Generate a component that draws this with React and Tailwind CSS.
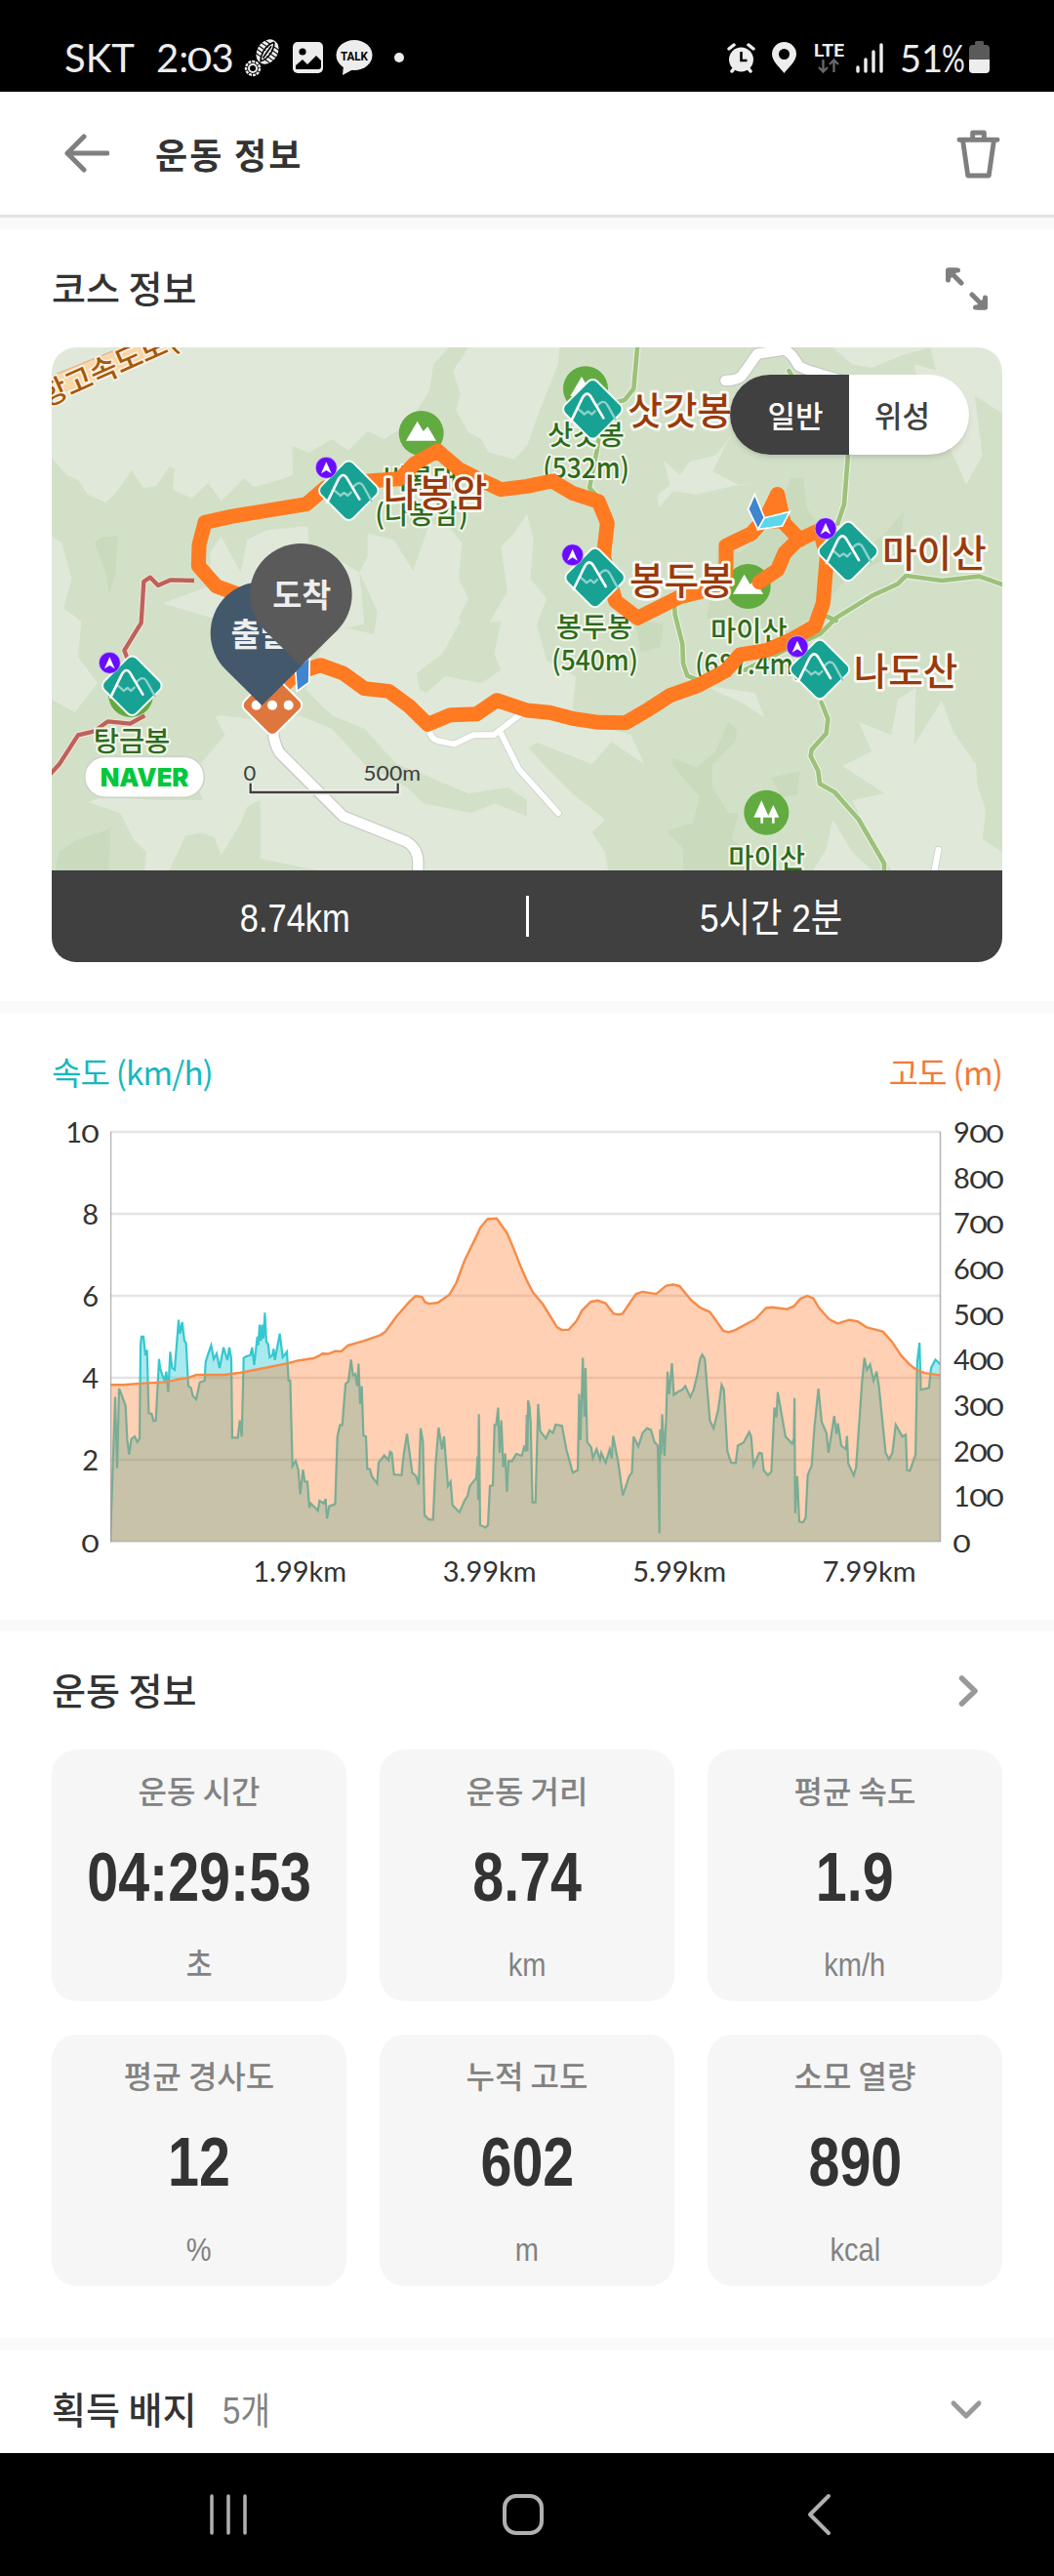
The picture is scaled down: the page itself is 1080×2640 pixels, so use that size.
import React from 'react';

const KR = "font-['Noto_Sans_CJK_KR',sans-serif]";
const NARROW = "font-['Liberation_Sans','Noto_Sans_CJK_KR',sans-serif]";
const ROUND = "font-['Lato','Noto_Sans_CJK_KR',sans-serif]";

const stats = [
  { label: '운동 시간', value: '04:29:53', unit: '초' },
  { label: '운동 거리', value: '8.74', unit: 'km' },
  { label: '평균 속도', value: '1.9', unit: 'km/h' },
  { label: '평균 경사도', value: '12', unit: '%' },
  { label: '누적 고도', value: '602', unit: 'm' },
  { label: '소모 열량', value: '890', unit: 'kcal' },
];

const elevationA =
  '220,972 260,972 310,968 390,964 425,957 460,952 485,944 570,944 620,938 690,926 765,912 800,904 845,898 860,892 872,885 890,886 912,878 930,879 950,863 1000,850 1050,834 1065,825 1100,782 1140,741 1158,726 1178,728 1187,742 1200,747 1227,744 1262,722 1283,690 1310,625 1340,570 1358,535 1380,512 1408,511 1440,552 1460,595 1482,645 1500,682';
const elevationB =
  '18,715 48,748 90,812 105,820 125,819 148,795 165,765 190,742 212,738 235,746 258,774 270,777 285,775 325,720 345,714 385,720 415,697 435,694 455,698 490,738 515,757 545,770 585,822 600,826 620,820 680,790 712,759 730,757 775,762 795,754 815,733 835,725 853,732 870,759 900,790 925,802 960,792 985,796 1010,812 1060,824 1085,850 1115,892 1140,916 1160,930 1185,939 1230,945';
const speedA =
  '220,1407 235,1005 241,1203 247,982 253,995 267,1030 272,1125 278,1165 284,1122 295,1115 303,1130 310,1120 313,860 316,838 322,838 328,890 333,875 338,1050 347,1052 353,1072 360,1070 370,900 373,925 380,945 387,960 392,935 398,992 404,880 410,925 418,930 430,792 434,830 441,798 448,850 453,856 460,975 468,980 474,1003 484,1012 495,965 510,960 513,908 523,880 530,862 538,900 547,885 556,925 568,868 580,903 586,868 592,900 595,1118 612,1118 618,1070 624,1115 630,897 640,892 650,890 656,868 662,917 672,838 675,862 679,805 683,850 687,805 691,843 695,772 700,853 705,858 710,895 718,890 722,872 726,903 741,830 750,895 763,880 768,960 773,960 780,1197 790,1182 798,1208 804,1275 812,1207 818,1240 826,1240 832,1312 836,1300 858,1320 863,1293 876,1300 882,1288 886,1342 893,1308 911,1302 918,1115 926,1083 933,1083 943,970 952,962 960,902 966,945 973,942 979,975 983,913 988,1025 993,975 998,1112 1006,1115 1010,1205 1018,1205 1024,1225 1040,1245 1045,1187 1062,1167 1075,1180 1080,1157 1085,1160 1092,1220 1115,1222 1122,1165 1132,1107 1148,1215 1160,1225 1168,1248 1174,1092 1181,1130 1186,1333 1200,1345 1212,1345 1220,1190 1229,1090 1240,1150 1246,1115 1258,1252 1266,1240 1272,1305 1293,1325 1310,1290 1318,1280 1325,1252 1345,1230 1349,1170 1351,1290 1353,1053 1357,1360 1373,1367 1381,1360 1387,1252 1396,1250 1401,1083 1406,1083 1412,1035 1417,1160 1422,1070 1428,1200 1434,1162 1439,1268 1444,1183 1455,1183 1468,1163 1485,1168 1493,1140 1498,1157';
const speedB =
  '0,1055 2,1155 4,1015 8,1030 12,1080 17,1297 26,1297 34,1025 40,1100 57,1120 68,1098 78,1105 86,1082 105,1085 118,1150 137,1215 152,1208 156,997 160,1125 167,897 172,1060 175,925 180,1130 192,1145 197,1175 208,1150 218,1178 222,1160 235,1187 247,1150 253,1175 257,1113 272,1185 286,1278 305,1225 313,1215 318,1115 332,1142 345,1105 358,1092 370,1097 380,1130 390,1140 395,1383 397,1095 400,1165 403,1053 410,1168 415,1060 419,935 424,997 432,912 438,1000 452,990 463,985 472,975 487,1005 497,985 508,942 516,900 522,888 530,900 545,1070 556,1092 570,1040 580,972 587,985 597,1155 608,1187 622,1188 628,1140 645,1132 662,1103 668,1115 675,1195 692,1160 700,1162 705,1208 718,1222 728,1212 737,1035 743,1062 747,992 755,1035 770,1115 790,1135 795,1120 797,1008 799,1327 805,1225 811,1350 822,1353 830,1340 836,1222 848,1195 856,1090 868,982 878,1075 892,1105 898,1160 915,1058 922,1108 926,1078 936,1140 950,1150 953,1113 957,1190 973,1223 980,1200 998,960 1005,897 1012,930 1022,915 1032,960 1041,935 1048,975 1068,1160 1078,1178 1088,1160 1098,1082 1118,1115 1128,1110 1132,1208 1140,1210 1157,1165 1162,910 1169,855 1173,985 1197,980 1203,925 1216,902 1226,910 1230,915';

const project = (run, originX, stepX) =>
  run.split(' ').map((pair) => {
    const [x, y] = pair.split(',').map(Number);
    return `${(originX + x / stepX).toFixed(1)},${((y - 271) / 2.703 + 2).toFixed(1)}`;
  });

const joinRuns = (a, b) => [...project(a, -73.3, 3), ...project(b, 426.7, 2.904)].join(' L');

const speedLine = joinRuns(speedA, speedB);
const elevationLine = joinRuns(elevationA, elevationB);

// Zeros are drawn as low round circles
const Digits = ({ children }) =>
  children.split('').map((ch, i) =>
    ch === '0' ? (
      <span key={i} className="inline-block origin-[50%_78%] scale-x-[1.1] scale-y-[0.84]">
        0
      </span>
    ) : (
      <span key={i}>{ch}</span>
    )
  );

const StatusBar = () => (
  <div className={`flex h-[94px] items-center bg-black pt-6 pl-[66px] pr-[66px] text-[40px] leading-none text-[#ededed] ${ROUND}`}>
    <span className="w-[94px]">SKT</span>
    <span className="w-[90px] whitespace-nowrap">
      <Digits>2:03</Digits>
    </span>
    <svg width="38" height="39" viewBox="0 0 38 39" fill="none" stroke="#ededed">
      <g transform="rotate(35 24 13)">
        <ellipse cx="24" cy="13" rx="10.5" ry="13.5" fill="#ededed" stroke="none" />
        <path d="M13 5h9M13 9h9M13 13h9M13 17h9M13 21h9M26 5h9M26 9h9M26 13h9M26 17h9M26 21h9" stroke="#000" strokeWidth="1.1" />
        <path d="M24 1c-5 7-5 17 0 24c5-7 5-17 0-24M24 6v15" stroke="#000" strokeWidth="1.6" />
      </g>
      <circle cx="9" cy="30" r="7" strokeWidth="2.4" strokeDasharray="3 1" />
      <circle cx="9" cy="30" r="4" strokeWidth="2" />
    </svg>
    <svg className="ml-3" width="31" height="32" viewBox="0 0 31 32">
      <rect width="31" height="32" rx="5" fill="#ededed" />
      <circle cx="10" cy="10" r="3.6" fill="#000" />
      <path d="M3 28v-4l7-6l5 5l9-9l5 5v6q0 3-3 3z" fill="#000" />
    </svg>
    <svg className="ml-[13px]" width="38" height="37" viewBox="0 0 38 37">
      <ellipse cx="19" cy="15.5" rx="18.5" ry="15.5" fill="#ededed" />
      <path d="M8 26l-1 10l11-6z" fill="#ededed" />
      <text x="5" y="20.5" fontSize="13" fontWeight="700" fontFamily="Roboto" textLength="28" lengthAdjust="spacingAndGlyphs" fill="#000">
        TALK
      </text>
    </svg>
    <span className="ml-[22px] size-2.5 rounded-full bg-[#ededed]" />

    <svg className="ml-auto" width="29" height="31" viewBox="0 0 29 31">
      <circle cx="14.5" cy="17" r="12.5" fill="#ededed" />
      <path d="M2 6l5-4M27 6l-5-4M5 29l3-4M24 29l-3-4" stroke="#ededed" strokeWidth="3.5" strokeLinecap="round" />
      <path d="M14.5 9v9h6" fill="none" stroke="#000" strokeWidth="2.6" />
    </svg>
    <svg className="ml-[17px]" width="25" height="32" viewBox="0 0 25 32">
      <path d="M12.500 32C9 27 0 20 0 12.500a12.500 12.500 0 0 1 25 0C25 20 16 27 12.500 32z" fill="#ededed" />
      <circle cx="12.500" cy="12.500" r="5.500" fill="#000" />
    </svg>
    <svg className="ml-[18px]" width="31" height="32" viewBox="0 0 31 32">
      <text x="0" y="14.500" fontSize="19" fontWeight="700" fontFamily="Roboto" textLength="31" lengthAdjust="spacingAndGlyphs" fill="#ededed">
        LTE
      </text>
      <path d="M9.500 18v12M5 26l4.500 4.500l4.500-4.500M20.500 31V19M16 23l4.500-4.500L25 23" fill="none" stroke="#666" strokeWidth="2.400" />
    </svg>
    <svg className="ml-3" width="28" height="32" viewBox="0 0 28 32">
      <path d="M2 26v4M10 18v12M18 10v20M26 3v27" stroke="#ededed" strokeWidth="3.400" strokeLinecap="round" />
    </svg>
    <span className="ml-[17px] flex w-[71px] text-[38px] whitespace-nowrap">
      <span className="w-[22px]">5</span>
      <span className="w-[21px]">1</span>
      <span className="origin-left scale-x-[0.78]">%</span>
    </span>
    <svg width="21" height="34" viewBox="0 0 21 34">
      <path d="M6 4V1.500Q6 0 7.500 0h6Q15 0 15 1.500V4h2q4 0 4 4v11H0V8q0-4 4-4z" fill="#5a5a5a" />
      <path d="M0 19h21v10q0 4-4 4H4q-4 0-4-4z" fill="#ededed" />
    </svg>
  </div>
);

const Header = () => (
  <div className="flex h-[129px] items-center border-b-[3px] border-[#e2e2e2] pl-[66px] pr-[55px]">
    <svg width="46" height="40" viewBox="0 0 46 40" fill="none" stroke="#7f7f7f" strokeWidth="5" strokeLinecap="round" strokeLinejoin="round">
      <path d="M20 3L3 20l17 17M3 20h41" />
    </svg>
    <h1 className={`ml-[47px] text-[36px] leading-none font-bold tracking-[2.200px] text-[#333] ${KR}`}>운동 정보</h1>
    <svg className="ml-auto" width="45" height="51" viewBox="0 0 46 52" fill="none" stroke="#7f7f7f" strokeWidth="5" strokeLinecap="round" strokeLinejoin="round">
      <path d="M3 11.500h40M7 14l5 35h22l5-35M17 10V4h12v6" />
    </svg>
  </div>
);

const SectionTitle = ({ children }) => (
  <h2 className={`-mt-[3px] text-[38px] leading-none font-medium text-[#333] ${KR}`}>{children}</h2>
);

const Peak = ({ x, y, badge = true }) => (
  <g transform={`translate(${x} ${y})`}>
    <rect x="-70" y="-70" width="140" height="140" rx="20" transform="rotate(45)" fill="#17a294" stroke="#f3faf4" strokeWidth="6" />
    <g fill="none" stroke="#8fd2ca" strokeWidth="7" strokeLinecap="round" strokeLinejoin="round">
      <path d="M14 -10Q34 -36 48 -8L70 32" />
      <path d="M-44 0l10 8l8 8l12-9l11 9l10-10" />
    </g>
    <path d="M-66 36L-32 -34Q-17 -60 -3 -34L33 27" fill="none" stroke="#fff" strokeWidth="8" strokeLinecap="round" />
    {badge && (
      <g transform="translate(-69 -70)">
        <circle r="33" fill="#6a0cff" stroke="#d9d3f3" strokeWidth="2" />
        <path d="M0 -18L16 18L0 8L-16 18z" fill="#fff" />
      </g>
    )}
  </g>
);

const Poi = ({ x, y, tree }) => (
  <g transform={`translate(${x} ${y})`}>
    <circle r="69" fill="#62ab41" />
    {tree ? (
      <path d="M-15 -37L8 15h-18v18h-8v-18h-21zM21 -23L39 15h-14v18h-8v-18h-14z" fill="#fff" />
    ) : (
      <path d="M-47 23L-12 -37L6 -6L20 -20L46 23z" fill="#fff" />
    )}
  </g>
);

const greenLabels = [
  ['비룡대', 1172, 482, 230],
  ['(나봉암)', 1176, 590, 286],
  ['삿갓봉', 1681, 348, 236],
  ['(532m)', 1682, 450, 266],
  ['봉두봉', 1707, 940, 236],
  ['(540m)', 1709, 1042, 266],
  ['마이산', 2182, 952, 236],
  ['(687.4m)', 2182, 1054, 330],
  ['마이산', 2237, 1650, 236],
  ['탕금봉', 285, 1290, 236],
];

const peaks = [
  { x: 1702, y: 238, badge: false, name: '삿갓봉', lx: 1810, ly: 286 },
  { x: 952, y: 488, name: '나봉암', lx: 1058, ly: 536 },
  { x: 1709, y: 756, name: '봉두봉', lx: 1815, ly: 806 },
  { x: 2487, y: 675, name: '마이산', lx: 2592, ly: 722 },
  { x: 2400, y: 1038, name: '나도산', lx: 2504, ly: 1086 },
  { x: 286, y: 1088 },
];

const trails = [
  'M1840 40L1828 175L1800 210L1760 220',
  'M1720 330L1715 365L1692 480L1730 520',
  'M2305 120L2330 160M2487 375L2475 530L2455 590',
  'M1953 830L1955 870L1978 960L1980 1020L1993 1058L2030 1072',
  'M2170 1040L2290 980L2400 930L2450 880L2560 812L2640 775L2665 750L2775 765L2890 752L2970 780M2410 870L2450 888',
  'M2405 1140L2425 1190L2420 1235L2375 1285L2372 1305L2395 1350L2400 1390L2445 1415L2520 1500L2598 1635V1670',
];

const redTrails = [
  'M477 765L405 763L366 780L342 755L322 768L314 895L262 980L272 1005',
  'M30 1365L62 1330L120 1240L170 1228L212 1198L280 1205L325 1180',
];

const CourseMap = () => (
  <svg className="block" width="974" height="536" viewBox="39 48 2922 1608" fontFamily="'Noto Sans CJK KR', sans-serif">
    <rect x="39" y="48" width="2922" height="1608" fill="#e0e9d9" />

    {/* Terrain */}
    <g fill="#d3e0c8">
      <path d="M39 388L85 440L120 455L150 500L205 525L240 490L285 425L320 480L360 475L400 415L418 420L410 485L470 512L520 465L560 520L630 450L660 478L740 455L780 440L778 350L830 372L900 330L950 365L1010 305L1060 330L1110 300L1160 245L1200 180L1212 100L1260 48L1320 48L1300 80L1272 120L1295 190L1282 240L1320 310L1360 330L1380 370L1460 392L1500 350L1540 240L1595 100L1600 48H2740L2760 130L2850 180L2961 250V1656H2560L2500 1600L2440 1500L2420 1590L2380 1656H1750L1740 1600L1700 1540L1740 1500L1640 1420L1560 1340L1505 1280L1530 1262L1700 1330L1760 1260L1860 1330L1820 1240L1720 1210L1640 1160L1650 1060L1560 1010L1530 900L1560 820L1510 760L1520 640L1500 560L1460 620L1420 660L1440 800L1380 900L1310 950L1290 880L1320 820L1290 760L1300 650L1260 600L1200 590L1150 735L1090 640L1010 620L1010 690L985 740L1040 860L1030 930L940 910L880 940L820 1100L900 1180L1000 1220L1100 1330L1180 1360L1320 1420L1440 1400L1500 1440V1490L1400 1450L1330 1480L1180 1450L1130 1400L1000 1330L900 1220L800 1180L720 1200L560 1180L500 1190L540 1180L572 1240L470 1360L505 1440L360 1440L200 1430L150 1446L250 1480L290 1560L330 1600L325 1656H39V1130L110 1170L180 1080L120 1000L130 890L75 850L100 760L70 650L39 628z" />
      <path d="M400 1656L450 1550L500 1540L540 1555L560 1610L620 1510L640 1460L680 1440V1620L780 1640L860 1656z" />
      <path d="M1170 1100L1160 1050L1240 990L1290 900L1420 890L1400 990L1420 1040L1360 1080L1250 1060L1190 1110z" />
    </g>
    <g fill="#e0e9d9">
      <path d="M530 780L525 680L560 630L620 740L640 640L700 610L825 598L830 650L900 690L985 740L1000 900L940 910L860 930L760 900L640 860L530 880L380 835z" />
      <path d="M1920 395L1970 440L2000 400L2080 380L2120 330L2070 430L2150 470L2210 465L2130 475L2020 500L1950 490L1905 540L1900 505L1940 470z" />
      <path d="M2440 48L2500 100L2560 110L2660 70L2740 48zM2690 100L2870 150L2900 380L2850 470L2820 400L2780 320L2720 260z" />
      <path d="M2470 1335L2560 1290L2520 1200L2620 1240L2640 1130L2695 1095L2690 1270L2775 1135L2810 1230L2880 1330L2885 1400L2910 1470L2900 1560L2961 1600V1656H2620L2560 1560L2500 1440L2600 1420z" />
      <path d="M2060 1090L2200 1110L2230 1185L2160 1140L2080 1105z" />
    </g>
    <g fill="#cadbbd">
      <path d="M170 650L190 632L243 628L235 740L215 810L205 740z" />
      <path d="M60 1600L120 1560L220 1528L215 1656H50z" />
      <path d="M2280 540L2310 450L2350 450L2360 540L2400 600L2380 640L2460 720L2520 680L2600 620L2660 550L2650 630L2600 700L2480 760L2400 860L2300 930L2180 900L2050 880L2070 800L2090 640L2150 680L2250 600z" />
      <path d="M2100 1240L2120 1200L2145 1220L2140 1260L2070 1330L2070 1400L2120 1480L2150 1480L2130 1560L2180 1600V1656H1980V1590L1930 1535L2010 1510L2030 1430L1945 1330L1950 1310L2020 1340L2080 1290z" />
      <path d="M2250 1370L2340 1350L2330 1425L2280 1430zM1830 880L1920 900L1910 970L1850 985z" />
    </g>

    {/* Highway */}
    <path d="M20 175L440 10" stroke="#f8d7a8" strokeWidth="62" />
    <path d="M20 143L300 30" stroke="#dfb49a" strokeWidth="4" />
    <text transform="translate(20 232) rotate(-24)" fontSize="91" fontWeight="500" fill="#a5580c" stroke="#fdf3e2" strokeWidth="10" paintOrder="stroke">
      항고속도로(
    </text>

    {/* Roads and trails */}
    <g fill="none" strokeLinejoin="round" strokeLinecap="round">
      {[['#c4c8c0', 38], ['#ffffff', 31]].map(([color, width]) => (
        <g key={color} stroke={color} strokeWidth={width}>
          <path d="M2110 150Q2145 150 2160 136L2208 68L2290 56Q2310 60 2335 104Q2345 115 2470 150L2540 190" />
          <path d="M720 1220Q718 1260 740 1295L935 1490L1130 1568Q1165 1590 1165 1630V1680" />
        </g>
      ))}
      {[['#ccd0c8', 23], ['#ffffff', 18]].map(([color, width]) => (
        <g key={color} stroke={color} strokeWidth={width}>
          <path d="M1200 1225Q1202 1250 1225 1257L1275 1268L1335 1240H1397L1500 1160M1415 1225L1475 1345L1596 1480" />
          <path d="M2765 1592L2750 1670" />
        </g>
      ))}
      {[['#ecf3e2', 20], ['#9cc17c', 14]].map(([color, width]) => (
        <g key={color} stroke={color} strokeWidth={width}>
          {trails.map((d) => (
            <path key={d} d={d} />
          ))}
        </g>
      ))}
      {[['#f4e4d8', 19], ['#bd625a', 13]].map(([color, width]) => (
        <g key={color} stroke={color} strokeWidth={width} strokeLinecap="butt">
          {redTrails.map((d) => (
            <path key={d} d={d} />
          ))}
        </g>
      ))}
    </g>

    <Poi x={1175} y={312} />
    <Poi x={1680} y={175} />
    <Poi x={2180} y={783} />
    <Poi x={2236} y={1478} tree />
    <circle cx="282" cy="1116" r="69" fill="#62ab41" />

    <g fontSize="86" fontWeight="500" fill="#2f6b1a" stroke="#f2f7ec" strokeWidth="12" strokeLinejoin="round" paintOrder="stroke" textAnchor="middle">
      {greenLabels.map(([name, x, y, w]) => (
        <text key={`${x}-${y}`} x={x} y={y} textLength={w} lengthAdjust="spacingAndGlyphs">
          {name}
        </text>
      ))}
    </g>

    {/* Recorded route */}
    <g fill="none" stroke="#ff7a21" strokeWidth="45" strokeLinecap="round" strokeLinejoin="round">
      <path d="M730 1110L790 1050L865 1025L935 1050L1000 1097L1075 1105L1140 1153L1195 1207L1265 1178L1345 1175L1407 1133L1500 1164L1570 1171L1645 1190L1720 1201L1803 1202L1875 1160L1940 1118L2025 1088L2110 1043L2155 993L2235 980L2310 948L2385 905L2410 835L2422 690L2400 610L2330 642L2292 680L2270 732L2214 770" />
      <path d="M2340 640L2288 586L2270 500L2235 570L2190 620L2112 658L2112 720L2110 770L2030 800L1970 815L1840 880L1772 828L1735 690L1747 588L1720 522L1640 496L1578 459L1500 475L1420 485L1350 452L1290 422L1225 366L1155 405L1110 452L1020 458L880 480L822 530L590 568L510 586L492 655L490 720L545 782L700 840" />
      <path d="M2270 500L2288 582H2235z" fill="#ff7a21" />
    </g>

    {/* Heading marker */}
    <g stroke="#fff" strokeWidth="5">
      <path d="M2200 500L2180 545L2210 608L2230 572z" fill="#3f85cf" />
      <path d="M2210 608L2230 572L2308 553L2285 597z" fill="#5cd6ea" />
      <path d="M788 1040L832 1000L830 1078L793 1105z" fill="#3f85cf" />
    </g>

    {peaks.map((p) => (
      <Peak key={`${p.x}`} x={p.x} y={p.y} badge={p.badge} />
    ))}
    <g fontSize="116" fontWeight="500" fill="#9a3a0c" stroke="#fbfbf6" strokeWidth="16" strokeLinejoin="round" paintOrder="stroke">
      {peaks
        .filter((p) => p.name)
        .map((p) => (
          <text key={p.name} x={p.lx} y={p.ly}>
            {p.name}
          </text>
        ))}
    </g>

    {/* Start / finish pins */}
    <rect x="-70" y="-70" width="140" height="140" rx="20" transform="translate(717 1148) rotate(45)" fill="#dd773d" stroke="#fff" strokeWidth="6" />
    <circle cx="668" cy="1148" r="15" fill="#fff" />
    <circle cx="717" cy="1148" r="15" fill="#fff" />
    <circle cx="767" cy="1148" r="15" fill="#fff" />
    <g fontSize="98" fontWeight="700" fill="#eee" textAnchor="middle">
      <path d="M685 1149L573 1038A158 158 0 1 1 797 1038z" fill="#44586c" />
      <text x="680" y="965">출발</text>
      <path d="M805 1028L694 919A157 157 0 1 1 916 919z" fill="#5a5a5a" />
      <text x="808" y="846">도착</text>
    </g>

    {/* Attribution and scale */}
    <rect x="140" y="1306" width="368" height="126" rx="63" fill="#fff" stroke="#cdd5c6" strokeWidth="5" />
    <text x="324" y="1397" textAnchor="middle" fontFamily="Inter" fontWeight="900" fontSize="79" textLength="272" lengthAdjust="spacingAndGlyphs" fill="#03c73c">
      NAVER
    </text>
    <path d="M650 1388V1416H1103V1388" fill="none" stroke="#f2f5ee" strokeWidth="16" />
    <path d="M650 1388V1416H1103V1388" fill="none" stroke="#404040" strokeWidth="7" />
    <g fill="#404040" fontFamily="Lato" fontSize="66" textAnchor="middle">
      <text x="648" y="1379">0</text>
      <text x="1085" y="1381" textLength="176" lengthAdjust="spacingAndGlyphs">500m</text>
    </g>
  </svg>
);

const CourseSection = () => (
  <section className="h-[791px] px-[53px]">
    <div className="flex h-[121px] items-center justify-between">
      <SectionTitle>코스 정보</SectionTitle>
      <svg className="mr-[15px]" width="43" height="44" viewBox="0 0 43 44" fill="none" stroke="#7f7f7f" strokeWidth="5" strokeLinecap="round" strokeLinejoin="round">
        <path d="M2.500 13V3h10M3 3l13 13M40.500 31v10h-10M40 41L27 28" />
        <path d="M3 3h7l-7 7zM40 41h-7l7-7z" fill="#7f7f7f" />
      </svg>
    </div>
    <div className="relative overflow-hidden rounded-[25px]">
      <CourseMap />
      <div className={`absolute top-[28px] right-[34px] flex h-[82px] w-[245px] overflow-hidden rounded-full bg-white text-[31px] leading-none font-medium shadow-md ${KR}`}>
        <span className="flex w-[122px] items-center justify-center bg-[#404040] pb-0.5 pl-3 text-white">일반</span>
        <span className="flex flex-1 items-center justify-center pr-3.5 pb-0.5 text-[#404040]">위성</span>
      </div>
      <div className={`flex h-[94px] items-center bg-[#404040] text-[41px] leading-none text-white ${NARROW}`}>
        <div className="flex-1 pt-1 pl-3 text-center">
          <span className="inline-block scale-x-[0.84]">8.74km</span>
        </div>
        <div className="h-[42px] w-[3px] bg-white" />
        <div className="flex-1 pt-1 pl-3 text-center">
          <span className="inline-block scale-x-[0.86] whitespace-nowrap">5시간 2분</span>
        </div>
      </div>
    </div>
  </section>
);

const ChartSection = () => (
  <section className="h-[622px]">
    <div className={`flex h-[107px] items-center justify-between px-[53px] pt-[13px] text-[33px] leading-none tracking-[-0.800px] ${KR}`}>
      <span className="text-[#16b8c0]">속도 (km/h)</span>
      <span className="text-[#f27b35]">고도 (m)</span>
    </div>
    <div className={`flex text-[29px] leading-[30px] text-[#333] ${ROUND}`}>
      <div className="flex h-[450px] w-[101px] flex-col justify-between text-right">
        {['10', '8', '6', '4', '2', '0'].map((t) => (
          <span key={t}>
            <Digits>{t}</Digits>
          </span>
        ))}
      </div>
      <svg className="mt-[13px] ml-3 block" width="853" height="425" viewBox="0 0 853 425" fill="none">
        <path d="M0 2H851M0 86H851M0 170H851M0 254H851M0 338H851M0 422H851" stroke="#e4e4e4" strokeWidth="2.500" />
        <path d={`M${speedLine} L850.500,422 L0,422z`} fill="#09c3ce" fillOpacity="0.35" />
        <path d={`M${speedLine}`} stroke="#22c3cc" strokeOpacity="0.9" strokeWidth="2.200" />
        <path d={`M${elevationLine} L850.500,422 L0,422z`} fill="#ff7926" fillOpacity="0.35" />
        <path d={`M${elevationLine}`} stroke="#f68b48" strokeWidth="2.400" strokeLinejoin="round" />
        <path d="M0.500 2V422M850.500 2V422" stroke="#a0a0a0" strokeOpacity="0.8" strokeWidth="1.500" />
      </svg>
      <div className="ml-[11px] flex h-[450px] flex-col justify-between">
        {['900', '800', '700', '600', '500', '400', '300', '200', '100', '0'].map((t) => (
          <span key={t}>
            <Digits>{t}</Digits>
          </span>
        ))}
      </div>
    </div>
    <div className={`ml-[210px] flex h-[27px] overflow-hidden text-[29px] leading-[30px] text-[#333] ${ROUND}`}>
      {['1.99km', '3.99km', '5.99km', '7.99km'].map((t) => (
        <span key={t} className="w-[194.500px] text-center">
          {t}
        </span>
      ))}
    </div>
  </section>
);

const StatCard = ({ label, value, unit }) => (
  <div className="flex h-[258px] flex-col items-center rounded-[26px] bg-[#f6f6f6]">
    <span className={`mt-[25px] text-[32px] leading-[32px] font-medium text-[#828282] ${KR}`}>{label}</span>
    <span className={`mt-[38px] h-[70px] scale-x-[0.82] text-[70px] leading-[72px] font-bold text-[#333] ${NARROW}`}>{value}</span>
    <span className={`mt-[39px] scale-x-[0.88] text-[33px] leading-[34px] font-medium text-[#828282] ${NARROW}`}>{unit}</span>
  </div>
);

const WorkoutSection = () => (
  <section className="h-[724px] px-[53px]">
    <div className="flex h-[121px] items-center justify-between">
      <SectionTitle>운동 정보</SectionTitle>
      <svg className="mr-6" width="21" height="34" viewBox="0 0 21 34" fill="none" stroke="#999" strokeWidth="5.500" strokeLinecap="round" strokeLinejoin="round">
        <path d="M3.500 4l13.500 13l-13.500 13" />
      </svg>
    </div>
    <div className="grid grid-cols-3 gap-[34px]">
      {stats.map((s) => (
        <StatCard key={s.label} {...s} />
      ))}
    </div>
  </section>
);

const BadgeSection = () => (
  <section className="h-[105px] overflow-hidden px-[53px]">
    <div className="flex h-[121px] items-center">
      <SectionTitle>획득 배지</SectionTitle>
      <span className={`ml-[27px] origin-left scale-x-[0.87] pt-0.5 text-[38px] leading-none whitespace-nowrap text-[#828282] ${NARROW}`}>5개</span>
      <svg className="mr-[20px] ml-auto" width="34" height="22" viewBox="0 0 34 22" fill="none" stroke="#999" strokeWidth="5" strokeLinecap="round" strokeLinejoin="round">
        <path d="M4 4l13 13l13-13" />
      </svg>
    </div>
  </section>
);

const NavBar = () => (
  <div className="flex h-[126px] items-center bg-black pl-[215px]">
    <svg width="38" height="42" viewBox="0 0 38 42" stroke="#b0b0b0" strokeWidth="3.500" strokeLinecap="round">
      <path d="M2 2v38M19 2v38M36 2v38" />
    </svg>
    <span className="ml-[262px] size-[42px] rounded-[14px] border-4 border-[#b0b0b0]" />
    <svg className="ml-[270px]" width="25" height="44" viewBox="0 0 25 44" fill="none" stroke="#b0b0b0" strokeWidth="4" strokeLinecap="round" strokeLinejoin="round">
      <path d="M22 3L3 22l19 19" />
    </svg>
  </div>
);

export default function App() {
  return (
    <div className="flex h-[2640px] w-[1080px] flex-col overflow-hidden bg-white">
      <StatusBar />
      <Header />
      <div className="h-3 bg-[#fafafa]" />
      <CourseSection />
      <div className="h-3 bg-[#fafafa]" />
      <ChartSection />
      <div className="h-3 bg-[#fafafa]" />
      <WorkoutSection />
      <div className="h-[13px] bg-[#fafafa]" />
      <BadgeSection />
      <NavBar />
    </div>
  );
}
